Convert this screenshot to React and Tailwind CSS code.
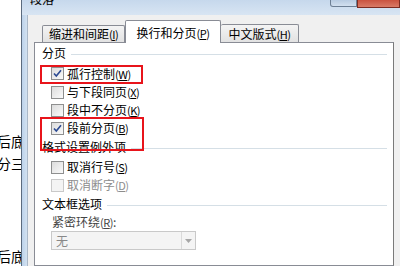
const Key = ({ k }) => (
  <span className="text-[11px] tracking-[-0.5px]">
    (<span className="underline">{k}</span>)
  </span>
)

const Box = ({ checked, disabled }) => (
  <span
    className={
      disabled
        ? 'relative w-[13px] h-[13px] shrink-0 border border-[#c9c9c9] bg-[#f4f4f4]'
        : 'relative w-[13px] h-[13px] shrink-0 border border-[#8e8f8f] bg-gradient-to-br from-[#dcdcdc] to-[#fafafa]'
    }
  >
    {checked && (
      <svg width="11" height="11" viewBox="0 0 11 11" className="absolute left-0 top-0">
        <path d="M2 5.5 L4.3 8 L9 2.2" fill="none" stroke="#2c4a92" strokeWidth="1.6" />
      </svg>
    )}
  </span>
)

const Row = ({ label, k, checked, disabled, className = 'h-[18px]' }) => (
  <div className={`flex items-center gap-[3px] pl-[9px] ${className}`}>
    <Box checked={checked} disabled={disabled} />
    <span className={disabled ? 'text-[#8d8d8d]' : 'text-black'}>
      {label}
      <Key k={k} />
    </span>
  </div>
)

const Heading = ({ text, className = '' }) => (
  <div className={`flex items-center gap-[5px] h-[18px] ${className}`}>
    <span className="text-black">{text}</span>
    <div className="flex-1 h-px bg-[#d5dfe6] mt-[2px]" />
  </div>
)

export default function App() {
  return (
    <div
      className="relative w-[400px] h-[266px] overflow-hidden flex bg-white text-[12px] leading-[16px]"
      style={{ fontFamily: '"Noto Sans CJK SC", "Liberation Sans", sans-serif' }}
    >
      {/* document behind the dialog */}
      <div className="w-[21px] shrink-0 overflow-hidden bg-white text-[14px] leading-[22px] text-black">
        <div className="-ml-[3px] pt-[130px] whitespace-nowrap">
          <div>后底纹</div>
          <div>分三栏</div>
          <div className="mt-[71px]">后底纹</div>
        </div>
      </div>

      {/* dialog */}
      <div className="flex-1 flex flex-col border-l border-[#5b6b7e]">
        <div className="h-[15px] shrink-0 flex bg-gradient-to-b from-[#c6d8ec] to-[#d8e5f3]">
          <span className="pl-[8px] -mt-[9px] text-black">段落</span>
          <div className="ml-auto flex items-start">
            <div className="w-[27px] h-[7px] border border-t-0 border-[#6d7f94] rounded-bl-[3px] bg-gradient-to-b from-[#b7cbe1] to-[#d2e0ef]" />
            <div className="w-[43px] h-[8px] border border-t-0 border-[#7c2c22] bg-gradient-to-b from-[#c9523f] to-[#d97a66]" />
          </div>
        </div>

        <div className="flex-1 flex">
          <div className="w-[6px] shrink-0 bg-gradient-to-r from-[#bcd2ea] to-[#d3e2f1] border-r border-[#aab8c8]" />
          <div className="flex-1 flex flex-col bg-[#f0f0f0] pl-[6px]">
            {/* tabs */}
            <div className="h-[27px] shrink-0 flex items-end pl-[8px] text-black">
              <div className="w-[83px] h-[17px] border border-b-0 border-[#898c95] rounded-t-[2px] bg-gradient-to-b from-[#f4f4f4] to-[#e2e2e2] flex justify-center">
                缩进和间距<Key k="I" />
              </div>
              <div className="relative z-10 -mb-px w-[96px] h-[23px] border border-b-0 border-[#898c95] rounded-t-[2px] bg-white flex justify-center pt-[4px]">
                换行和分页<Key k="P" />
              </div>
              <div className="w-[78px] h-[18px] border border-b-0 border-l-0 border-[#898c95] rounded-t-[2px] bg-gradient-to-b from-[#f4f4f4] to-[#e2e2e2] flex justify-center pt-[1px]">
                中文版式<Key k="H" />
              </div>
            </div>

            {/* panel */}
            <div className="w-[360px] flex-1 bg-white border border-[#898c95] border-r-[#7a7a7a] pl-[7px] pr-[6px]">
              <Heading text="分页" className="mt-[1px]" />
              <Row label="孤行控制" k="W" checked className="mt-[2px] h-[19px]" />
              <Row label="与下段同页" k="X" />
              <Row label="段中不分页" k="K" />
              <Row label="段前分页" k="B" checked />
              <Heading text="格式设置例外项" className="mt-[1px]" />
              <Row label="取消行号" k="S" className="mt-[2px] h-[18px]" />
              <Row label="取消断字" k="D" disabled />
              <Heading text="文本框选项" className="mt-[1px]" />
              <div className="h-[18px] flex items-center pl-[10px] text-[#444]">
                紧密环绕<Key k="R" />:
              </div>
              <div className="ml-[9px] w-[145px] h-[19px] flex border border-[#c9c9c9] bg-[#f4f4f4]">
                <span className="flex-1 pl-[4px] leading-[17px] text-[#888]">无</span>
                <div className="w-[14px] border-l border-[#dadada] flex items-center justify-center">
                  <svg width="7" height="4" viewBox="0 0 7 4">
                    <path d="M0 0 H7 L3.5 4 Z" fill="#a6a6a6" />
                  </svg>
                </div>
              </div>
            </div>
          </div>
        </div>
      </div>

      {/* red annotation boxes */}
      <div className="absolute left-[40px] top-[65px] w-[103px] h-[19px] border-2 border-[#e8141b]" />
      <div className="absolute left-[40px] top-[117px] w-[104px] h-[34px] border-2 border-[#e8141b]" />
    </div>
  )
}
